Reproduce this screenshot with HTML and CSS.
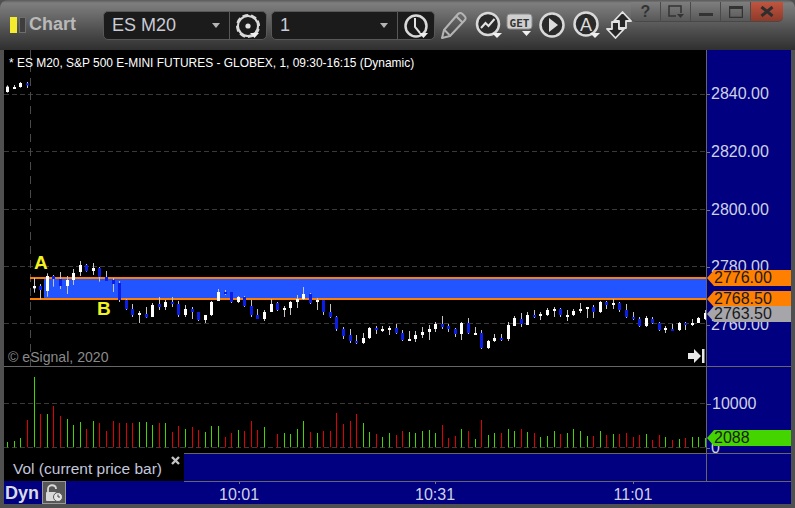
FILE: index.html
```html
<!DOCTYPE html>
<html lang="en">
<head>
<meta charset="utf-8">
<title>Chart</title>
<link rel="stylesheet" href="styles.css">
</head>
<body>
<div class="window">
  <header class="toolbar">
    <span class="led led-on"></span>
    <span class="led"></span>
    <span class="app-title">Chart</span>

    <div class="combo combo-symbol">
      <span class="combo-value">ES M20</span>
      <span class="caret"></span>
      <span class="combo-icon">
        <svg class="icon" width="28" height="28" viewBox="0 0 28 28">
          <circle class="ring ring-gear" cx="14" cy="14" r="10.500"/>
          <circle class="ring-gap" cx="14" cy="14" r="12"/>
          <circle class="dot" cx="14" cy="14" r="2.600"/>
          <path class="mini-caret" d="M16 21h9l-4.500 5z"/>
        </svg>
      </span>
    </div>

    <div class="combo combo-interval">
      <span class="combo-value">1</span>
      <span class="caret"></span>
      <span class="combo-icon">
        <svg class="icon" width="28" height="28" viewBox="0 0 28 28">
          <circle class="ring" cx="14" cy="14" r="10.500"/>
          <path class="hand" d="M13 6v9l5 6"/>
          <path class="mini-caret" d="M17 21h9l-4.500 5z"/>
        </svg>
      </span>
    </div>

    <svg class="icon tool tool-pencil" width="28" height="30" viewBox="0 0 28 30">
      <path class="outline" d="M2 28l2-8L18 4c1.500-1.500 3-1.500 4.500 0l2 2c1.500 1.500 1.500 3 0 4.500L10 26z"/>
      <path class="outline" d="M16 6l6.500 6.500M4.500 20l5 5"/>
    </svg>
    <svg class="icon tool tool-trend" width="28" height="28" viewBox="0 0 28 28">
      <circle class="ring dark" cx="13" cy="13" r="11"/>
      <path class="hand" d="M6 17l4.500-5 3 3 6-7"/>
      <path class="mini-caret" d="M17 22h10l-5 5z"/>
    </svg>
    <svg class="icon tool tool-get" width="28" height="28" viewBox="0 0 28 28">
      <rect class="get-bg" x="1" y="3" width="25" height="15" rx="3"/>
      <text class="get-text" x="13.500" y="15.500" text-anchor="middle">GET</text>
      <path class="mini-caret" d="M16 20h9l-4.500 5z"/>
    </svg>
    <svg class="icon tool tool-play" width="28" height="28" viewBox="0 0 28 28">
      <circle class="ring dark" cx="14" cy="14" r="11.500"/>
      <path class="solid" d="M11 7l9 7-9 7z"/>
    </svg>
    <svg class="icon tool tool-auto" width="28" height="28" viewBox="0 0 28 28">
      <circle class="ring dark" cx="13" cy="13" r="11.500"/>
      <text class="auto-text" x="13" y="19.500" text-anchor="middle">A</text>
      <path class="mini-caret" d="M17 22h10l-5 5z"/>
    </svg>
    <svg class="icon tool tool-swap" width="26" height="28" viewBox="0 0 26 28">
      <path class="swap-arrow" d="M1 18h5v-7h7v7h5l-8.500 9z"/>
      <path class="swap-arrow" d="M25 10h-5v7h-7v-7H8l8.500-9z"/>
    </svg>

    <nav class="caption">
      <button class="cap-btn cap-help">?</button>
      <button class="cap-btn">
        <svg width="18" height="14" viewBox="0 0 18 14"><path class="cap-stroke" d="M9 11H2V1h12v7"/><path class="cap-fill" d="M10 9h7l-3.500 4z"/></svg>
      </button>
      <button class="cap-btn">
        <svg width="14" height="14" viewBox="0 0 14 14"><rect class="cap-fill" x="0" y="8" width="14" height="3"/></svg>
      </button>
      <button class="cap-btn">
        <svg width="14" height="12" viewBox="0 0 14 12"><path class="cap-stroke" d="M.500.500h13v11H.500z"/><rect class="cap-fill" x="0" y="0" width="14" height="3"/></svg>
      </button>
      <button class="cap-btn cap-close">
        <svg width="14" height="11" viewBox="0 0 14 11"><path class="cap-x" d="M1.500 1l11 9M12.500 1l-11 9"/></svg>
      </button>
    </nav>
  </header>

  <main class="panes">
    <section class="pane pane-price">
      <div class="plot">
        <svg id="priceChart" class="chart" width="702" height="316" viewBox="4 50 702 316"></svg>
        <p class="study-title">* ES M20, S&amp;P 500 E-MINI FUTURES - GLOBEX, 1, 09:30-16:15 (Dynamic)</p>
        <span class="marker marker-a">A</span>
        <span class="marker marker-b">B</span>
        <span class="copyright">© eSignal, 2020</span>
        <svg class="jump" width="17" height="14" viewBox="0 0 17 14">
          <path d="M0 4h6V0l7 7-7 7v-4H0z"/>
          <rect x="14" y="0" width="2.500" height="14"/>
        </svg>
      </div>
      <div class="axis">
        <span class="axis-label p2840">2840.00</span>
        <span class="axis-label p2820">2820.00</span>
        <span class="axis-label p2800">2800.00</span>
        <span class="axis-label p2780">2780.00</span>
        <span class="axis-label p2760">2760.00</span>
        <span class="tag tag-orange t2776">2776.00</span>
        <span class="tag tag-orange t2768">2768.50</span>
        <span class="tag tag-gray t2763">2763.50</span>
      </div>
    </section>

    <section class="pane pane-volume">
      <div class="plot">
        <svg id="volumeChart" class="chart" width="702" height="86" viewBox="4 367 702 86"></svg>
      </div>
      <div class="axis">
        <span class="axis-label v10000">10000</span>
        <span class="axis-label v0">0</span>
        <span class="tag tag-green t2088">2088</span>
      </div>
    </section>

    <section class="legend-row">
      <div class="legend">
        <span class="legend-text">Vol (current price bar)</span>
        <svg class="legend-close" width="9" height="9" viewBox="0 0 9 9"><path d="M1 1l7 7M8 1L1 8"/></svg>
      </div>
      <div class="legend-fill"></div>
    </section>

    <footer class="timebar">
      <span class="dyn">Dyn</span>
      <span class="lock">
        <svg width="22" height="20" viewBox="0 0 22 20">
          <path class="lock-shackle" d="M5 10V6c0-5 8-5 8 0"/>
          <rect class="lock-body" x="3" y="9" width="10" height="9" rx="1"/>
          <circle class="lock-clock" cx="15" cy="14" r="4.500"/>
          <path class="lock-hand" d="M15 11.500V14h2"/>
        </svg>
      </span>
      <div class="times">
        <span class="time t1001">10:01</span>
        <span class="time t1031">10:31</span>
        <span class="time t1101">11:01</span>
      </div>
    </footer>
  </main>
</div>
<script src="chart.js"></script>
</body>
</html>
```

FILE: styles.css
```css
* { box-sizing: border-box; }
html, body { margin: 0; padding: 0; background: #3a3a3a; }
body { width: 795px; height: 508px; overflow: hidden; font-family: "Liberation Sans", Arial, sans-serif; }

.window { position: relative; width: 795px; height: 508px; display: flex; flex-direction: column; background: #505050; }

/* toolbar */
.toolbar {
  position: relative; height: 50px; flex: none; display: flex; align-items: center;
  padding: 0 0 0 10px; border-radius: 8px 8px 0 0;
  background: linear-gradient(#5a5a5a 0, #7e7e7e 3px, #6c6c6c 14px, #4c4c4c 32px, #2f2f2f 50px);
}
.led { width: 7px; height: 16px; margin-right: 2px; margin-top: -1px; border: 1px solid #6d6d6d; background: #3e3e3e; }
.led-on { background: #f5ec2e; border-color: #f5ec2e; }
.app-title { margin-left: 1px; margin-top: -1px; width: 74px; font-size: 18px; font-weight: bold; color: #b9b9b9; }

.combo { position: relative; display: flex; align-items: center; height: 29px; margin-top: 1px; border: 1px solid #585858; border-radius: 5px; background: #1b1b1b; }
.combo-symbol { width: 164px; }
.combo-interval { width: 164px; margin-left: 4px; }
.combo-value { flex: 1; padding-left: 8px; font-size: 18px; color: #c9ccd6; }
.caret { width: 0; height: 0; margin-right: 9px; border-style: solid; border-width: 5px 4.500px 0; border-color: #b5b5b5 transparent transparent; }
.combo-icon { width: 37px; height: 27px; display: flex; align-items: center; justify-content: center; border-left: 1px solid #585858; }

.icon { display: block; flex: none; }
.ring { fill: none; stroke: #d9d9d9; stroke-width: 2.500; }
.ring-gear { stroke-width: 3; }
.ring.dark { fill: #2a2a2a; }
.ring-gap { fill: none; stroke: #1b1b1b; stroke-width: 2; stroke-dasharray: 3 6.420; }
.dot { fill: #e2e2e2; }
.hand { fill: none; stroke: #e2e2e2; stroke-width: 2; }
.mini-caret { fill: #f0f0f0; }
.outline { fill: none; stroke: #b4b4b4; stroke-width: 2; stroke-linejoin: round; }
.solid { fill: #dcdcdc; }
.get-bg { fill: #cfcfcf; stroke: #8c8c8c; }
.get-text { font-family: "DejaVu Sans Mono", monospace; font-size: 11px; font-weight: bold; fill: #333; }
.auto-text { font-size: 18px; fill: #dcdcdc; }
.swap-arrow { fill: #262626; stroke: #e2e2e2; stroke-width: 1.800; stroke-linejoin: round; }

.tool-pencil { margin-left: 5px; }
.tool-trend { margin-left: 7px; }
.tool-get { margin-left: 3px; }
.tool-play { margin-left: 4px; }
.tool-auto { margin-left: 7px; }
.tool-swap { margin-left: 5px; margin-top: -1px; }

/* caption buttons lie over the toolbar */
.caption { position: absolute; top: 2px; left: 631px; display: flex; height: 20px; }
.cap-btn {
  width: 30px; height: 20px; padding: 0; display: flex; align-items: center; justify-content: center;
  border: 0; border-right: 1px solid #4a4a4a; border-bottom: 1px solid #484848;
  background: linear-gradient(#7e7e7e, #585858); color: #333; font: bold 16px "Liberation Sans", sans-serif;
}
.cap-help { border-bottom-left-radius: 5px; }
.cap-close { width: 32px; border-right: 0; border-bottom-right-radius: 5px; background: linear-gradient(#c0553f, #8f3a2a); }
.cap-stroke { fill: none; stroke: #333; stroke-width: 1.500; }
.cap-fill { fill: #333; }
.cap-x { fill: none; stroke: #2e2e2e; stroke-width: 3; }

/* panes */
.panes { flex: 1; display: flex; flex-direction: column; margin: 0 4px 4px; background: #000080; }
.pane { display: flex; flex: none; }
.pane-price { height: 317px; border-bottom: 1px solid #666; }
.pane-volume { height: 86px; }
.plot { position: relative; width: 703px; flex: none; background: #000; border-right: 1px solid #666; overflow: hidden; }
.chart { display: block; }
.axis { position: relative; flex: 1; background: #000080; }
.axis-label { position: absolute; left: 4px; font-size: 16px; line-height: 16px; color: #cfd2e6; }
.axis-label::before { content: ""; position: absolute; left: -4px; top: 8px; width: 3px; height: 1px; background: #777; }
.p2840 { top: 36px; }
.p2820 { top: 94px; }
.p2800 { top: 152px; }
.p2780 { top: 209px; }
.p2760 { top: 267px; }
.v10000 { left: 5px; top: 29px; }
.v10000::before { left: -5px; width: 4px; }
.v0 { top: 73px; }

.tag {
  position: absolute; left: 0; right: 0; height: 16px; padding-left: 7px; font-size: 16px; line-height: 16px; color: #1a1a1a;
  clip-path: polygon(0 50%, 7px 0, 100% 0, 100% 100%, 7px 100%);
}
.tag-orange { background: #ff8000; }
.tag-gray { background: #a6a6aa; }
.tag-green { background: #44d400; }
.t2776 { top: 220px; }
.t2768 { top: 241px; }
.t2763 { top: 256px; }
.t2088 { top: 63px; }

.study-title { position: absolute; left: 5px; top: 6px; margin: 0; font-size: 11.950px; line-height: 14px; color: #fff; white-space: nowrap; }
.marker { position: absolute; font-size: 19px; line-height: 20px; font-weight: bold; color: #f2f21e; }
.marker-a { left: 30px; top: 203px; }
.marker-b { left: 93px; top: 249px; }
.copyright { position: absolute; left: 4px; top: 299px; font-size: 14.100px; line-height: 16px; color: #8a8a8a; white-space: nowrap; }
.jump { position: absolute; left: 684px; top: 299px; fill: #e8e8e8; }

/* legend row */
.legend-row { display: flex; height: 29px; flex: none; }
.legend { position: relative; width: 180px; flex: none; height: 28px; background: #000; padding-left: 9px; border-top: 1px solid #000; }
.legend-text { font-size: 15.500px; line-height: 29px; color: #c3c7dc; white-space: nowrap; }
.legend-close { position: absolute; left: 167px; top: 2px; fill: none; stroke: #c4c4c4; stroke-width: 2.400; }
.legend-fill { flex: 1; border-top: 1px solid #666; border-bottom: 1px solid #666; background: linear-gradient(to right, #000080 522px, #666 522px, #666 523px, #000080 523px); }

/* time bar */
.timebar { flex: 1; display: flex; align-items: center; position: relative; }
.dyn { margin-left: 1px; font-size: 18px; font-weight: bold; color: #d8dae6; width: 37px; }
.lock { width: 24px; height: 23px; margin-top: -1px; display: flex; align-items: center; justify-content: center; background: #575757; border: 1px solid #9a9a9a; }
.lock-shackle { fill: none; stroke: #d8d8d8; stroke-width: 1.800; }
.lock-body { fill: #d8d8d8; }
.lock-clock { fill: #e4e4e4; stroke: #575757; }
.lock-hand { fill: none; stroke: #444; }
.times { position: relative; flex: 1; height: 100%; }
.time { position: absolute; top: 5px; width: 40px; margin-left: -20px; text-align: center; font-size: 16px; line-height: 16px; color: #cfd2e6; }
.time::before { content: ""; position: absolute; left: 20px; top: -5px; width: 1px; height: 2px; background: #777; }
.t1001 { left: 173px; }
.t1031 { left: 369px; }
.t1101 { left: 567px; }
```

FILE: chart.js
```js
var NS = 'http://www.w3.org/2000/svg';

function add(svg, tag, attrs) {
  var el = document.createElementNS(NS, tag);
  for (var k in attrs) el.setAttribute(k, attrs[k]);
  svg.appendChild(el);
}
function rect(svg, x, y, w, h, fill) {
  add(svg, 'rect', { x: x, y: y, width: w, height: h, fill: fill });
}
function dashH(svg, y, x1, x2) {
  add(svg, 'line', { x1: x1, x2: x2, y1: y + 0.5, y2: y + 0.5, stroke: '#3a3a3a', 'stroke-dasharray': '5 3' });
}

/* candles: x, wick top, wick bottom, body top, body bottom, blue? (all in 3x reference units per block) */
var blocks = [
  { bx: 0, by: 70, d: [
    [22,46,68,50,66,0],[43,45,57,51,56,0],[61,36,53,39,51,0],[82,36,54,40,46,1]
  ]},
  { bx: 0, by: 240, d: [
    [103,114,158,138,145,0],[121,132,178,138,150,1],[142,100,170,108,153,0],[160,105,140,108,117,1],
    [181,96,147,117,138,1],[202,108,162,120,138,0],[220,87,135,99,120,0],[241,63,108,75,96,0],
    [259,72,95,75,93,1],[280,69,105,84,93,0],[298,81,125,84,111,1],[319,93,123,111,123,1],
    [340,114,156,120,132,1],[358,123,186,129,180,1],[379,177,210,180,207,1],[397,192,231,207,225,1],
    [418,213,249,219,225,0],[439,201,234,222,232,1],[457,189,231,195,231,0],[478,171,210,192,201,1],
    [496,180,210,186,201,0],[517,171,201,186,192,1],[535,183,231,192,225,1],[556,195,231,207,225,0],
    [577,201,237,207,216,1],[595,216,243,216,240,1],[616,225,249,225,240,0],[634,183,228,186,225,0],
    [655,147,183,156,183,0],[676,150,165,156,162,1],[694,156,189,156,186,1],[715,168,189,171,186,0],
    [733,168,201,171,198,1],[754,180,231,198,225,1],[772,207,237,225,237,1]
  ]},
  { bx: 260, by: 270, d: [
    [13,120,153,126,147,0],[34,87,126,102,126,0],[52,96,123,99,120,1],[73,108,141,114,120,0],
    [91,93,135,96,114,0],[112,75,114,87,96,0],[130,51,90,72,87,0],[151,69,102,72,99,1],
    [172,84,120,90,96,0],[190,90,135,90,126,1],[211,102,144,126,141,1],[229,138,183,141,177,1],
    [250,171,207,177,198,1],[271,177,219,195,213,1],[289,195,222,213,219,1],[310,189,222,204,219,0],
    [328,171,207,174,204,0],[349,168,192,174,180,1],[367,168,186,177,183,0],[388,168,195,174,180,0],
    [409,162,192,174,189,1],[427,180,213,189,210,1],[448,183,213,207,213,0],[466,183,216,195,207,0],
    [487,171,204,186,195,0],[508,165,210,177,186,0],[526,156,186,162,177,0],[547,138,177,162,171,1],
    [565,162,186,168,177,1],[586,174,201,177,192,1],[604,156,210,159,192,0],[625,144,192,159,189,1],
    [646,171,195,189,195,0],[664,180,237,189,234,1],[685,210,237,213,234,0],[703,192,216,204,213,0],
    [724,192,213,204,210,1],[745,156,213,165,207,0],[763,138,168,144,168,0]
  ]},
  { bx: 520, by: 260, d: [
    [4,159,201,177,192,1],[22,156,195,165,195,0],[43,150,174,165,171,1],[61,156,180,162,168,0],
    [82,144,168,150,165,0],[103,141,171,147,153,0],[121,144,171,147,165,1],[142,150,183,165,171,0],
    [160,147,168,153,165,0],[181,129,159,147,153,0],[202,141,174,141,147,0],[220,135,174,141,156,1],
    [241,123,159,126,156,0],[259,123,147,126,135,1],[280,117,147,129,135,0],[298,126,156,129,150,1],
    [319,132,174,150,171,1],[340,156,180,171,177,1],[358,171,201,177,198,1],[379,168,201,174,198,0],
    [397,171,192,177,189,1],[418,186,213,189,210,1],[436,198,219,204,210,0],[457,192,213,207,213,1],
    [478,186,213,189,210,0],[496,186,210,189,195,1],[517,177,198,189,195,0],[535,171,189,174,189,0],
    [556,150,180,159,177,0]
  ]}
];

/* volume: x, top (3x reference units), colour flag 1 = green */
var volumes = [
  { bx: 0, d: [[22,216,1],[43,213,1],[61,204,1],[82,150,0],[103,21,1],[121,132,0],[142,132,1],[160,108,0],
    [181,138,0],[202,147,1],[220,165,1],[241,156,1],[259,177,0],[280,153,1],[298,159,0],[319,183,0],
    [340,153,0],[358,159,0],[379,159,0],[397,159,0],[418,156,1],[439,156,1],[457,165,1],[478,159,0],
    [496,159,1],[517,186,0],[535,168,0],[556,177,1],[577,171,0],[595,180,0],[616,186,1],[634,168,1],
    [655,168,1],[676,201,0],[694,189,0],[715,180,1],[733,183,0],[754,153,0],[772,180,0],[793,171,1]] },
  { bx: 270, d: [[22,192,0],[43,189,1],[61,192,1],[82,177,1],[100,153,1],[121,186,0],[142,189,1],[160,183,0],
    [181,183,0],[199,129,0],[220,162,0],[241,153,0],[259,132,0],[280,159,1],[298,186,1],[319,192,0],
    [337,201,1],[358,189,1],[379,195,0],[397,183,0],[418,186,1],[436,189,1],[457,183,1],[478,180,1],
    [496,189,1],[517,165,0],[535,204,0],[556,198,0],[574,177,1],[595,183,0],[616,207,1],[634,150,0],
    [655,195,1],[673,189,1],[694,189,0],[715,177,1],[733,183,1],[754,177,0],[772,186,1]] },
  { bx: 532, d: [[7,189,0],[25,201,1],[46,198,1],[67,183,1],[85,192,0],[106,189,1],[124,177,1],[145,183,1],
    [166,198,1],[184,198,0],[205,183,1],[223,195,0],[244,192,1],[262,192,0],[283,189,0],[304,201,0],
    [322,195,0],[343,192,1],[361,210,0],[382,195,0],[400,201,1],[421,210,0],[442,207,1],[460,204,0],
    [481,201,1],[499,201,1],[520,204,1]] }
];

var price = document.getElementById('priceChart');
[94, 151, 209, 266, 323].forEach(function (y) { dashH(price, y, 4, 706); });
add(price, 'line', { x1: 30.5, x2: 30.5, y1: 50, y2: 366, stroke: '#4a4a4a', 'stroke-dasharray': '8 6' });
rect(price, 44, 279, 662, 19, '#2255ff');
rect(price, 30, 277, 676, 2, '#ff8000');
rect(price, 30, 298, 676, 2, '#ff8000');

blocks.forEach(function (b) {
  b.d.forEach(function (c) {
    var x = Math.floor(b.bx + c[0] / 3);
    var col = c[5] ? '#0a1ee6' : '#ffffff';
    rect(price, x, b.by + c[1] / 3, 1, (c[2] - c[1]) / 3, '#c4c4c4');
    rect(price, x - 1, b.by + c[3] / 3, 3, Math.max(2, (c[4] - c[3]) / 3), col);
  });
});

var vol = document.getElementById('volumeChart');
dashH(vol, 403, 4, 706);
dashH(vol, 447, 4, 706);
volumes.forEach(function (b) {
  b.d.forEach(function (v) {
    rect(vol, Math.floor(b.bx + v[0] / 3), 370 + v[1] / 3, 1, (232 - v[1]) / 3, v[2] ? '#44d400' : '#e00000');
  });
});
```
